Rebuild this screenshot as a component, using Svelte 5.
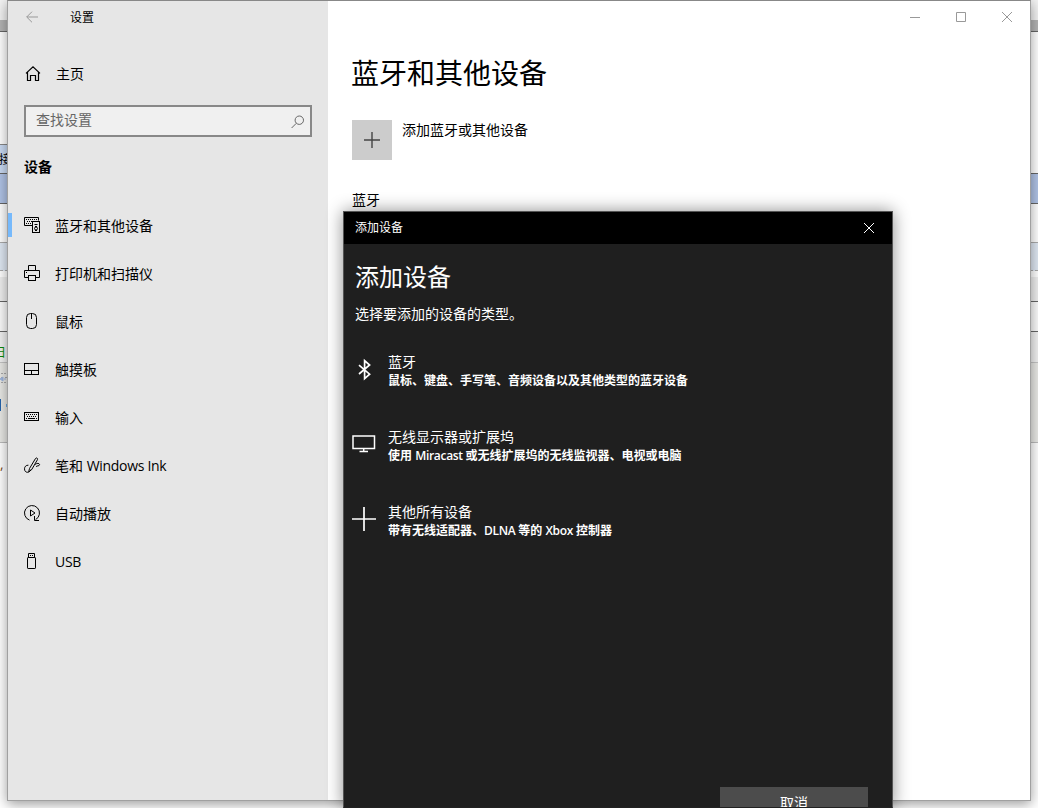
<script lang="ts">
  const navItems = [
    { icon: 'devices', label: '蓝牙和其他设备', active: true },
    { icon: 'printer', label: '打印机和扫描仪' },
    { icon: 'mouse', label: '鼠标' },
    { icon: 'touchpad', label: '触摸板' },
    { icon: 'keyboard', label: '输入' },
    { icon: 'pen', label: '笔和 Windows Ink' },
    { icon: 'autoplay', label: '自动播放' },
    { icon: 'usb', label: 'USB' }
  ];

  const deviceTypes = [
    { icon: 'bluetooth', title: '蓝牙', text: '鼠标、键盘、手写笔、音频设备以及其他类型的蓝牙设备' },
    { icon: 'monitor', title: '无线显示器或扩展坞', text: '使用 Miracast 或无线扩展坞的无线监视器、电视或电脑' },
    { icon: 'plus', title: '其他所有设备', text: '带有无线适配器、DLNA 等的 Xbox 控制器' }
  ];

  // latin words are set a little tighter than the chinese around them
  const runs = (text: string) => text.split(/([A-Za-z][A-Za-z ]*)/).filter(Boolean);
  const isLatin = (run: string) => /^[A-Za-z]/.test(run);
</script>

{#snippet mixed(text: string)}
  {#each runs(text) as run}<span class:latin={isLatin(run)}>{run}</span>{/each}
{/snippet}

{#snippet strips(side: string)}
  <div class="behind {side}">
    <div class="strip tabs"></div>
    <div class="strip bar"></div>
    <div class="strip blank"></div>
    <div class="strip pale">{#if side === 'left'}接{/if}</div>
    <div class="strip blue"></div>
    <div class="strip white"></div>
    <div class="strip ice"></div>
    <div class="strip gap"></div>
    <div class="strip gray"></div>
    <div class="strip light"></div>
    <div class="strip day">{#if side === 'left'}<span>日</span>{/if}</div>
    <div class="strip tools">
      {#if side === 'left'}
        <svg width="8" height="80" viewBox="0 0 8 80">
          <path d="M1 10.5h7M1 14.5h2M5 14.5h3M1 19.5h7" stroke="#aaa" stroke-dasharray="2 1" />
          <path d="M0 16l3-2v4zM4 16h2" fill="#9eb6df" stroke="#9eb6df" />
          <path d="M0 36h1v12H0z" fill="#2463ad" stroke="none" />
          <path d="M6 41h2v3H6z" fill="#6aa9e0" stroke="none" />
          <path d="M7 59h1v16H7z" fill="#888" stroke="none" />
        </svg>
      {/if}
    </div>
    <div class="strip rest">{#if side === 'left'}<span>,</span>{/if}</div>
  </div>
{/snippet}

<div class="desktop">
  {@render strips('left')}
  {@render strips('right')}

  <div class="window">
    <aside>
      <div class="titlebar">
        <svg class="back" width="12" height="12" viewBox="0 0 12 12">
          <path d="M12 6H.8M6 .7L.7 6 6 11.3" />
        </svg>
        <span>设置</span>
      </div>

      <div class="home">
        <svg width="24" height="24" viewBox="0 0 24 24">
          <path d="M6 11.4L13 4.8 20 11.4M7.5 10v8.5h3v-5h5v5h3V10" stroke-width="1.2" />
        </svg>
        <span>主页</span>
      </div>

      <div class="search">
        <span>查找设置</span>
        <svg width="14" height="14" viewBox="0 0 14 14">
          <circle cx="8.3" cy="5.2" r="4.2" />
          <path d="M5.3 8.3L.6 13" />
        </svg>
      </div>

      <h2>设备</h2>

      <nav>
        {#each navItems as item}
          <div class="nav-item" class:active={item.active}>
            <svg width="24" height="24" viewBox="0 0 24 24">
              {#if item.icon === 'devices'}
                <path d="M12 11.5H4.5v-8h14v3" />
                <path d="M6 5.5h12M7 7.5h5M6 9.5h6" stroke-dasharray="1 1" />
                <rect x="12.5" y="7.5" width="7" height="11" />
                <circle cx="16" cy="14.5" r="1.5" />
                <path d="M14.5 10.5h3M15 12.5h2M15 16.5h2" />
              {:else if item.icon === 'printer'}
                <path d="M8.5 15.5h-4v-7h15v7h-4M8.5 8.5v-5h7v5M6 10.5h1" />
                <rect x="8.5" y="13.5" width="7" height="5" />
              {:else if item.icon === 'mouse'}
                <rect x="6.5" y="3.5" width="10" height="15" rx="4" />
                <path d="M11.5 4v5" />
              {:else if item.icon === 'touchpad'}
                <rect x="4.5" y="5.5" width="14" height="11" />
                <path d="M4.5 12.5h14M11.5 12.5v4" />
              {:else if item.icon === 'keyboard'}
                <rect x="4.5" y="6.5" width="14" height="8" />
                <path d="M6 8.5h12M7 10.5h10" stroke-dasharray="1 1" />
                <path d="M6 12.5h1M8 12.5h7M16 12.5h1" />
              {:else if item.icon === 'pen'}
                <path d="M9.5 14.5l6-10c.7-1.2 2.7-.3 2 1.1l-5.8 10-3 2.2z" />
                <path d="M8.4 11.2C6 11 4.5 12.8 4.5 14.8c0 4.5 5 4.6 6.7.5M15.3 10.5c2-2 4.6-1 4.2.4-.3 1.3-2 .5-3.4 1.7" />
              {:else if item.icon === 'autoplay'}
                <path d="M9.5 18.1A7.5 7.5 0 1 1 15.6 17.6M14.5 14v4.5H19" />
                <path d="M10.5 8v6l4.5-3z" />
              {:else}
                <rect x="7.5" y="7.5" width="8" height="11" rx=".6" />
                <path d="M8.5 7.5v-4h6v4M10 5.5h1M12 5.5h1" />
              {/if}
            </svg>
            <div>{@render mixed(item.label)}</div>
          </div>
        {/each}
      </nav>
    </aside>

    <main>
      <div class="controls">
        <svg width="10" height="10" viewBox="0 0 10 10"><path d="M0 5.5h10" /></svg>
        <svg width="10" height="10" viewBox="0 0 10 10"><path d="M.5.5h9v9h-9z" /></svg>
        <svg width="10" height="10" viewBox="0 0 10 10"><path d="M0 0l10 10M10 0L0 10" /></svg>
      </div>
      <h1>蓝牙和其他设备</h1>
      <div class="add">
        <div class="tile">
          <svg width="16" height="16" viewBox="0 0 16 16"><path d="M8 0v16M0 8h16" stroke-width="1.4" /></svg>
        </div>
        <span>添加蓝牙或其他设备</span>
      </div>
      <div class="label">蓝牙</div>
    </main>
  </div>

  <div class="dialog">
    <header>
      <span>添加设备</span>
      <svg width="10" height="10" viewBox="0 0 10 10"><path d="M0 0l10 10M10 0L0 10" /></svg>
    </header>
    <div class="dialog-body">
      <h3>添加设备</h3>
      <p>选择要添加的设备的类型。</p>
      <div class="types">
        {#each deviceTypes as type}
          <div class="type">
            <svg width="24" height="24" viewBox="0 0 24 24">
              {#if type.icon === 'bluetooth'}
                <path d="M7 8.2l10.6 9-5 4.4V3.6l5 4.4L7 17" stroke-width="1.7" />
              {:else if type.icon === 'monitor'}
                <path d="M1 4h21.5v12.5H1zM11.7 16.5V19M7.5 19.5h8.5" stroke-width="1.5" />
              {:else}
                <path d="M12 0v24M0 12h24" stroke-width="1.7" />
              {/if}
            </svg>
            <div>
              <div class="type-title">{type.title}</div>
              <div class="type-desc">{@render mixed(type.text)}</div>
            </div>
          </div>
        {/each}
      </div>
      <button>取消</button>
    </div>
  </div>
</div>

<style>
  :global(body) {
    overflow: hidden;
  }

  .desktop {
    position: relative;
    width: 1038px;
    height: 808px;
    overflow: hidden;
    background: #fff;
    color: #000;
    font-family: 'Open Sans', 'Noto Sans CJK SC', sans-serif;
    font-size: 14px;
    line-height: 20px;
  }

  svg {
    display: block;
    flex: none;
    fill: none;
    stroke: currentColor;
    stroke-width: 1;
  }

  h1,
  h2,
  h3,
  p {
    margin: 0;
    font-weight: 400;
  }

  .latin {
    letter-spacing: -0.3px;
  }

  /* what shows of the program behind the settings window */
  .behind {
    position: absolute;
    top: 0;
    left: 0;
    width: 8px;
    height: 808px;
    overflow: hidden;
  }

  .behind.right {
    left: 1030px;
  }

  .strip {
    box-sizing: border-box;
    border-bottom: 1px solid #666;
    overflow: hidden;
    white-space: nowrap;
  }

  .tabs {
    height: 20px;
    background: #f3f3f3;
    border: 0;
  }

  .bar {
    height: 12px;
    background: #b4b4b4;
  }

  .blank {
    height: 113px;
    border-color: #888;
  }

  .right .blank {
    border-color: #fff;
  }

  .pale {
    height: 29px;
    background: #c9daf3;
    font-size: 12px;
    line-height: 30px;
    text-indent: -1px;
  }

  .right .pale {
    background: #fff;
  }

  .blue {
    height: 30px;
    background: #b0c3e6;
  }

  .white {
    height: 39px;
    border-color: #aaa;
  }

  .ice {
    height: 28px;
    background: #dfe8f3;
    border-bottom: 1px dashed #aaa;
  }

  .gap {
    height: 6px;
    border: 0;
  }

  .gray {
    height: 25px;
    background: #efefef;
  }

  .light {
    height: 30px;
    background: #fbfbfb;
  }

  .day {
    height: 31px;
    background: #f1f1f1;
    border-color: #c4c4c4;
    color: #0a8a0a;
    font-size: 12px;
    line-height: 42px;
    text-indent: -6px;
  }

  .tools {
    height: 80px;
    background: #e9e9e6;
    border-color: #bbb;
  }

  .rest {
    height: 365px;
    border: 0;
    color: #7a4a20;
    line-height: 42px;
  }

  .window {
    position: absolute;
    left: 7px;
    top: 0;
    display: flex;
    box-sizing: border-box;
    width: 1024px;
    height: 801px;
    border: 1px solid #a0a0a0;
    border-top-color: #888;
    background: #fff;
    box-shadow: 0 3px 12px rgba(0, 0, 0, 0.4);
  }

  aside {
    width: 320px;
    background: #e6e6e6;
  }

  .titlebar {
    display: flex;
    align-items: center;
    gap: 32px;
    height: 32px;
    padding-left: 18px;
    font-size: 12px;
  }

  .titlebar span {
    padding-top: 2px;
  }

  .back {
    color: #999;
  }

  .home {
    display: flex;
    align-items: center;
    gap: 12px;
    height: 48px;
    margin-top: 17px;
    padding-left: 12px;
  }

  .search {
    display: flex;
    justify-content: space-between;
    align-items: center;
    box-sizing: border-box;
    height: 32px;
    margin: 7px 16px 0;
    padding: 0 5px 2px 10px;
    border: 2px solid #888;
    background: #f0f0f0;
    color: #666;
  }

  .search svg {
    margin-top: 3px;
  }

  h2 {
    height: 60px;
    margin-bottom: 5px;
    padding-left: 16px;
    font-size: 14px;
    font-weight: 700;
    line-height: 60px;
  }

  .nav-item {
    display: flex;
    align-items: center;
    gap: 11px;
    height: 48px;
    padding-left: 12px;
  }

  .nav-item.active {
    background: linear-gradient(#76b9fb, #76b9fb) 0 11px / 4px 24px no-repeat;
  }

  main {
    flex: 1;
    padding-left: 24px;
  }

  .controls {
    display: flex;
    justify-content: flex-end;
    align-items: center;
    gap: 36px;
    height: 32px;
    padding-right: 18px;
    color: #999;
  }

  h1 {
    height: 48px;
    margin: 16px 0 23px -1px;
    font-size: 28px;
    line-height: 48px;
  }

  .add {
    display: flex;
    gap: 10px;
  }

  .tile {
    display: grid;
    place-items: center;
    width: 40px;
    height: 40px;
    background: #ccc;
    color: #444;
  }

  .label {
    margin-top: 30px;
  }

  .dialog {
    position: absolute;
    left: 343px;
    top: 211px;
    box-sizing: border-box;
    width: 550px;
    height: 597px;
    overflow: hidden;
    border: 1px solid #555;
    border-bottom-color: #222;
    background: #1f1f1f;
    box-shadow: 0 0 16px rgba(0, 0, 0, 0.45);
    color: #fff;
  }

  header {
    display: flex;
    justify-content: space-between;
    align-items: center;
    height: 32px;
    padding: 0 18px 0 11px;
    background: #000;
    font-size: 12px;
  }

  .dialog-body {
    display: flex;
    flex-direction: column;
    height: 575px;
    padding: 0 24px 0 11px;
  }

  h3 {
    height: 40px;
    margin-top: 13px;
    font-size: 24px;
    line-height: 40px;
  }

  p {
    margin-top: 7px;
  }

  .types {
    margin-top: 28px;
    margin-left: -3px;
  }

  .type {
    display: flex;
    gap: 12px;
    height: 75px;
  }

  .type > svg {
    margin-top: 5px;
  }

  .type-title {
    height: 20px;
  }

  .type-desc {
    font-size: 12px;
    font-weight: 600;
    line-height: 17px;
  }

  button {
    align-self: flex-end;
    flex: none;
    width: 148px;
    height: 32px;
    margin-top: auto;
    padding: 0;
    border: 0;
    background: #4c4c4c;
    color: #fff;
    font: inherit;
  }
</style>
